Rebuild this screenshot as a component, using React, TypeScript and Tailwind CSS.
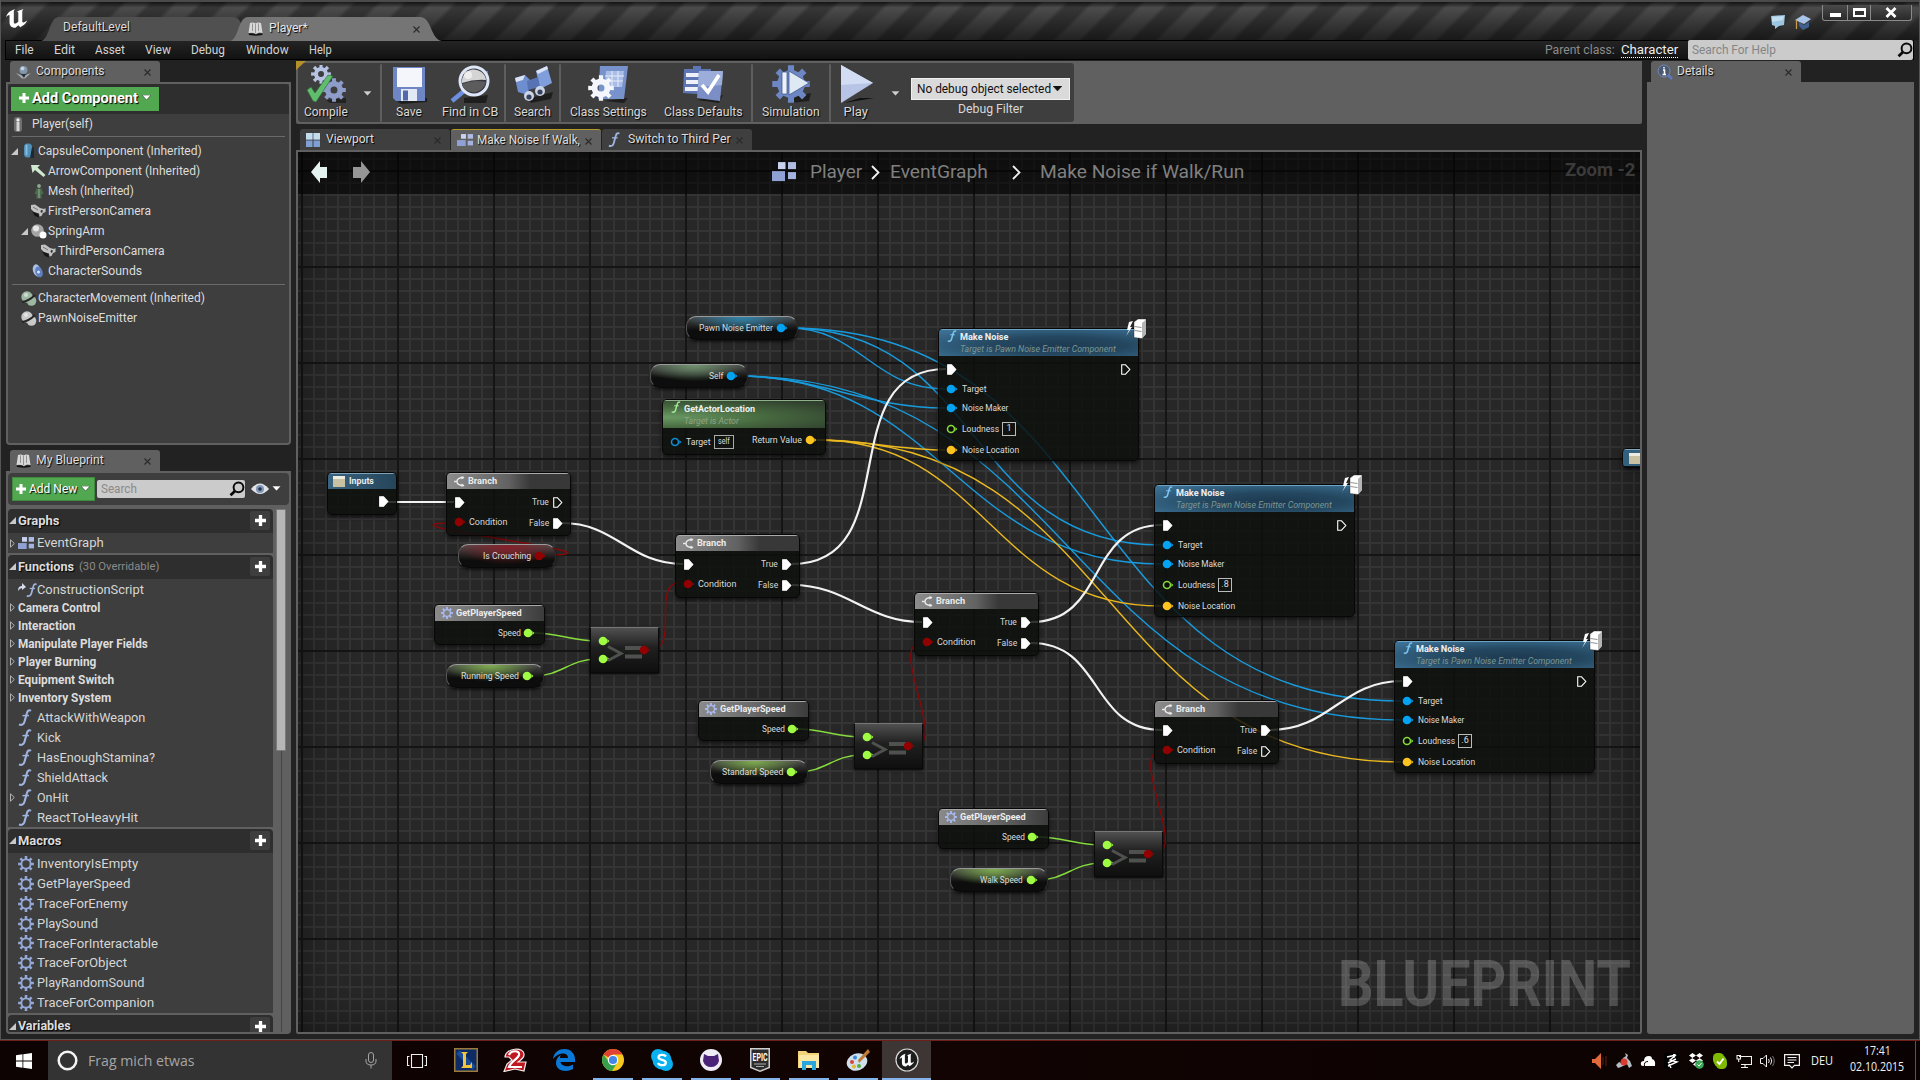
import React, { useLayoutEffect, useRef } from "react";

function Fit({ w, children, className = "" }: { w: number; children: React.ReactNode; className?: string }) {
  const ref = useRef<HTMLSpanElement>(null);
  useLayoutEffect(() => {
    const el = ref.current;
    if (el && el.offsetWidth) el.style.transform = `scaleX(${w / el.offsetWidth})`;
  }, [w]);
  return (
    <span className={"block shrink-0 whitespace-nowrap " + className} style={{ width: w }}>
      <span ref={ref} className="inline-block origin-left whitespace-nowrap">
        {children}
      </span>
    </span>
  );
}

const shadow = "[text-shadow:1px_1px_1px_#000]";

/* ---------- small icons ---------- */
const gearTeeth = (n: number, ri: number, ro: number) => {
  let d = "";
  for (let i = 0; i < n; i++) {
    const a = (i / n) * Math.PI * 2 - Math.PI / 2;
    const s = Math.PI / n;
    const p = (r: number, t: number) => `${(r * Math.cos(t)).toFixed(2)} ${(r * Math.sin(t)).toFixed(2)}`;
    d += `${i ? "L" : "M"}${p(ri, a - s * 0.55)}L${p(ro, a - s * 0.42)}L${p(ro, a + s * 0.42)}L${p(ri, a + s * 0.55)}`;
  }
  return d + "Z";
};

function Gear({ s = 16, c = "#94a8d6" }: { s?: number; c?: string }) {
  return (
    <svg width={s} height={s} viewBox="-10 -10 20 20" className="shrink-0">
      <path d={gearTeeth(8, 7, 10) + "M0 -4.6A4.6 4.6 0 1 0 0 4.6A4.6 4.6 0 1 0 0 -4.6Z"} fill={c} fillRule="evenodd" />
    </svg>
  );
}

function FuncIcon({ h = 17, c = "#9fb4e0" }: { h?: number; c?: string }) {
  return (
    <svg width={h * 0.82} height={h} viewBox="0 0 14 17" className="shrink-0">
      <path d="M13 1.8C11.4.6 9.6 1.4 8.9 4.2L6.5 12.8C5.8 15.6 3.5 16.6 1 15.4" fill="none" stroke={c} strokeWidth="2.1" />
      <path d="M4.5 6.6H11" stroke={c} strokeWidth="1.5" />
    </svg>
  );
}

function GraphIcon({ w = 17 }: { w?: number }) {
  return (
    <svg width={w} height={w * 0.8} viewBox="0 0 24 19" className="shrink-0">
      <rect x="6" y="0" width="7.5" height="7" fill="#c8d2ee" />
      <rect x="16" y="0" width="8" height="7" fill="#aebbe2" />
      <rect x="0" y="9" width="13" height="10" fill="#8fa0d4" />
      <rect x="16" y="10" width="8" height="7" fill="#a3b2de" />
    </svg>
  );
}

function Book() {
  return (
    <svg width="15" height="14" viewBox="0 0 15 14" className="shrink-0">
      <path d="M2 1Q5 0 7.5 1.5Q10 0 13 1L14.5 11Q10.500 9.500 8 12Q4.500 10 .5 11Z" fill="#d8d8d8" />
      <path d="M4.500 1.500V9M7.500 2V11M10.500 1.500V9" stroke="#777" strokeWidth=".7" />
      <path d="M.5 11.500Q5 10.500 8 12.500Q11 10.500 14.500 11.500V13L8 13.800L1 13Z" fill="#111" />
    </svg>
  );
}

function Plus({ s = 11 }: { s?: number }) {
  return (
    <svg width={s} height={s} viewBox="0 0 10 10" className="shrink-0">
      <path d="M3.500 0H6.500V3.500H10V6.500H6.500V10H3.500V6.500H0V3.500H3.500Z" fill="#fff" />
    </svg>
  );
}

function Down({ c = "#fff", w = 9 }: { c?: string; w?: number }) {
  return (
    <svg width={w} height={w / 2 + 1} viewBox="0 0 10 6" className="shrink-0">
      <path d="M0 0H10L5 5.500Z" fill={c} stroke="#111" strokeWidth=".5" />
    </svg>
  );
}

const TriOpen = () => (
  <svg width="7" height="7" viewBox="0 0 7 7" className="shrink-0">
    <path d="M7 0V7H0Z" fill="#c8c8c8" />
  </svg>
);
const TriClosed = () => (
  <svg width="5" height="9" viewBox="0 0 5 9" className="shrink-0">
    <path d="M.5 .8L4.300 4.500L.5 8.200Z" fill="none" stroke="#c0c0c0" strokeWidth=".9" />
  </svg>
);
const Close = () => (
  <svg width="7" height="7" viewBox="0 0 7 7" className="shrink-0">
    <path d="M.5 .5L6.500 6.500M6.500 .5L.5 6.500" stroke="#2a2a2a" strokeWidth="1.100" />
  </svg>
);
const Magnifier = () => (
  <svg width="16" height="16" viewBox="0 0 16 16" className="shrink-0">
    <circle cx="9.500" cy="6.300" r="4.900" fill="none" stroke="#0a0a0a" strokeWidth="2" />
    <path d="M6 10L1.500 14.300" stroke="#0a0a0a" strokeWidth="2.800" />
  </svg>
);

const ULogo = ({ s, c = "#fff" }: { s: number; c?: string }) => (
  <svg width={s} height={s * 0.86} viewBox="0 0 22 19" className="shrink-0">
    <path
      d="M0 8.500C1 4 4 1.500 9 .3C8 1.300 7.800 2 7.800 3V13.200C7.800 14.600 9 15 10.300 14.300L12.300 12.800V4C12.300 3 11.800 2.600 10.700 2.700C13 1.800 14.800 .9 17.500 0C16.600 1.100 16.300 1.700 16.300 2.800V12.300C16.300 13.500 17.200 13.700 18.300 13.300L21.300 11.500C19.500 15.300 17 16.800 14.200 18.300L12.400 16.300L9.400 18.800C5.500 19 3.500 16.800 3.500 13.300V6.500C3.500 5.500 1.800 6 0 8.500Z"
      fill={c}
    />
  </svg>
);

/* ---------- panels ---------- */
function Tab({ label, w, icon, active = true, gold = false }: { label: string; w: number; icon: React.ReactNode; active?: boolean; gold?: boolean }) {
  return (
    <div
      className={
        "flex h-[21px] w-[150px] shrink-0 items-center rounded-t-[3px] pr-[9px] pl-[6px] " +
        (active ? "bg-[#606060] " : "bg-[#3f3f3f] ") +
        (gold ? "border-t border-[#b49a28]" : "")
      }
    >
      <span className="flex w-5 shrink-0 items-center">{icon}</span>
      <Fit w={w} className={"text-[12px] leading-[19px] text-[#dedede] " + shadow}>
        {label}
      </Fit>
      <span className="mt-[2px] ml-auto">
        <Close />
      </span>
    </div>
  );
}

const CameraIcon = () => (
  <svg width="16" height="14" viewBox="0 0 16 14">
    <path d="M0 1L4 0.500L7 2.500L9 4L13 5L14.500 4V8L12 9L10.500 12L8.500 12.500L8 9.500L3 8L0 5Z" fill="#c2c2c2" />
    <path d="M1 7.500L7.500 10L8 13.500L4 12Z" fill="#161616" />
    <path d="M10 6L12 6.500L11 9L9.500 8Z" fill="#333" />
    <path d="M2 3L7 6" stroke="#777" strokeWidth="1" />
  </svg>
);
const BallsIcon = ({ c }: { c: string }) => (
  <svg width="16" height="15" viewBox="0 0 16 15">
    <circle cx="6" cy="6" r="5.700" fill={c} />
    <circle cx="10.500" cy="10" r="4.800" fill={c} />
    <path d="M1 11Q8 10 14 4" stroke="#262626" strokeWidth="1.800" fill="none" />
    <circle cx="5" cy="4" r="2" fill="#fff" opacity=".5" />
  </svg>
);

const compRows: { pad: string; w: number; label: string; open?: boolean; icon: React.ReactNode }[] = [
  { pad: "pl-[3px]", w: 164, label: "CapsuleComponent (Inherited)", open: true, icon: <svg width="11" height="16" viewBox="0 0 11 16"><rect x="1" y="0.500" width="8" height="14" rx="3.500" fill="#4f8fb8" /><rect x="2.500" y="1.500" width="2" height="11" rx="1" fill="#86bcd9" /><path d="M9 4L11 5V15L7 15Z" fill="#1b2a33" /></svg> },
  { pad: "pl-[13px]", w: 152, label: "ArrowComponent (Inherited)", icon: <svg width="15" height="13" viewBox="0 0 15 13"><path d="M0 0H9L6.500 2.500L14.500 10L12.500 12L4 5L1.500 8Z" fill="#cfe8cf" /></svg> },
  { pad: "pl-[13px]", w: 86, label: "Mesh (Inherited)", icon: <svg width="10" height="15" viewBox="0 0 10 15"><circle cx="5" cy="2" r="1.900" fill="#8fa890" /><path d="M2.500 4.500H7.500L9.500 10H7.500V14.500H2.500V10H.5Z" fill="#4d6b4f" /><path d="M5 5V14" stroke="#8fb091" /></svg> },
  { pad: "pl-[13px]", w: 103, label: "FirstPersonCamera", icon: <CameraIcon /> },
  { pad: "pl-[13px]", w: 57, label: "SpringArm", open: true, icon: <svg width="16" height="15" viewBox="0 0 16 15"><circle cx="6.500" cy="6.500" r="6.300" fill="#a5a5a5" /><circle cx="5" cy="4.500" r="3" fill="#e6e6e6" /><circle cx="12" cy="11" r="3.500" fill="#fff" /></svg> },
  { pad: "pl-[23px]", w: 107, label: "ThirdPersonCamera", icon: <CameraIcon /> },
  { pad: "pl-[13px]", w: 94, label: "CharacterSounds", icon: <svg width="13" height="15" viewBox="0 0 13 15"><ellipse cx="5" cy="6.500" rx="4" ry="6.300" transform="rotate(-18 5 6.500)" fill="#a8bfe8" /><ellipse cx="7" cy="8" rx="3.600" ry="5.500" transform="rotate(-18 7 8)" fill="#5f7fc0" /><circle cx="6.500" cy="8" r="1.500" fill="#d8e4ff" /></svg> },
];

function CompRow({ pad, w, label, open, icon }: { pad: string; w: number; label: string; open?: boolean; icon: React.ReactNode }) {
  return (
    <div className={"flex h-5 items-center " + pad}>
      <span className="w-[9px] shrink-0">{open && <TriOpen />}</span>
      <span className="mr-px flex w-[17px] shrink-0 justify-center">{icon}</span>
      <Fit w={w} className="text-[12px] text-[#dcdcdc]">{label}</Fit>
    </div>
  );
}

function SectionHead({ label, w, extra, last }: { label: string; w: number; extra?: React.ReactNode; last?: boolean }) {
  return (
    <div className={"flex shrink-0 items-center rounded-t-[4px] bg-[#2e2e2e] pr-[3px] pl-[1px] " + (last ? "h-[21px] pt-px" : "h-6 pb-px")}>
      <TriOpen />
      <Fit w={w} className={"ml-[2px] font-bold text-[#dcdcdc] " + shadow + (last ? " text-[12px] leading-[11px]" : " text-[12px] leading-[14px]")}>{label}</Fit>
      {extra}
      <span className="ml-auto flex h-[19px] w-5 items-center justify-center rounded-[2px] bg-[#3e3e3e]">
        <Plus s={11} />
      </span>
    </div>
  );
}

function Item({ label, w, icon, tri }: { label: string; w: number; icon: React.ReactNode; tri?: boolean }) {
  return (
    <div className="flex h-5 items-center pl-[2px]">
      <span className="w-[8px] shrink-0">{tri && <TriClosed />}</span>
      <span className="flex w-[19px] shrink-0 items-center">{icon}</span>
      <Fit w={w} className="mt-px text-[12.500px] text-[#d6d6d6]">{label}</Fit>
    </div>
  );
}

const categories: [string, number][] = [
  ["Camera Control", 82], ["Interaction", 57], ["Manipulate Player Fields", 130], ["Player Burning", 78], ["Equipment Switch", 96], ["Inventory System", 93],
];
const functions: [string, number, boolean][] = [
  ["AttackWithWeapon", 108, false], ["Kick", 24, false], ["HasEnoughStamina?", 118, false], ["ShieldAttack", 71, false], ["OnHit", 32, true], ["ReactToHeavyHit", 101, false],
];
const macros: [string, number][] = [
  ["InventoryIsEmpty", 101], ["GetPlayerSpeed", 93], ["TraceForEnemy", 91], ["PlaySound", 61], ["TraceForInteractable", 121], ["TraceForObject", 90], ["PlayRandomSound", 108], ["TraceForCompanion", 117],
];

function LeftColumn() {
  return (
    <div className="flex w-[285px] shrink-0 flex-col">
      <div className="pl-[4px]">
        <Tab label="Components" w={69} icon={<svg width="15" height="14" viewBox="0 0 15 14"><circle cx="7.500" cy="5" r="4" fill="#8296ad" /><circle cx="6.500" cy="3.500" r="2" fill="#c4d0dc" /><path d="M0 8L7 11L15 8L9 13.500H6Z" fill="#aaa" /><path d="M5 9L10 9L8 13Z" fill="#20304a" /></svg>} />
      </div>
      <div className="flex h-[363px] flex-col rounded-b-[4px] border-2 border-[#606060] bg-[#3e3e3e]">
        <div className="flex h-[30px] shrink-0 items-start rounded-t-[4px] bg-[#2e2e2e] pt-[3px] pl-[3px]">
          <div className="flex h-6 w-[148px] items-center bg-[#51a851] pb-[2px] pl-[8px]">
            <Plus s={10} />
            <Fit w={106} className={"ml-[3px] text-[15px] leading-5 font-bold text-white " + shadow}>Add Component</Fit>
            <span className="ml-[4px]"><Down /></span>
          </div>
        </div>
        <div className="flex h-[22px] shrink-0 items-center pb-[2px] pl-[6px]">
          <svg width="8" height="15" viewBox="0 0 8 15"><rect width="8" height="15" rx="3" fill="#6f6f6f" /><circle cx="4" cy="3" r="1.700" fill="#eee" /><path d="M2.500 5H5.500V14H2.500Z" fill="#d5d5d5" /></svg>
          <Fit w={61} className="ml-[10px] text-[12px] text-[#dcdcdc]">Player(self)</Fit>
        </div>
        <div className="mx-[4px] mb-[4px] h-px shrink-0 bg-[#6a6a6a]" />
        {compRows.map((r) => <CompRow key={r.label} {...r} />)}
        <div className="mx-[4px] mt-[3px] mb-[3px] h-px shrink-0 bg-[#6a6a6a]" />
        <CompRow pad="pl-[3px]" w={167} label="CharacterMovement (Inherited)" icon={<BallsIcon c="#9db8a2" />} />
        <CompRow pad="pl-[3px]" w={99} label="PawnNoiseEmitter" icon={<BallsIcon c="#c9c9c9" />} />
      </div>
      <div className="mt-[5px] pl-[4px]">
        <Tab label="My Blueprint" w={68} icon={<Book />} />
      </div>
      <div className="flex h-[563px] flex-col overflow-hidden rounded-b-[4px] border-2 border-[#606060] bg-[#606060]">
        <div className="flex h-[32px] shrink-0 items-center rounded-[4px] bg-[#3e3e3e] pl-[4px]">
          <div className="flex h-6 w-[83px] items-center border border-[#3f8a3f] bg-[#51a851] pl-[3px]">
            <Plus s={10} />
            <Fit w={48} className={"ml-[3px] text-[12.500px] text-white " + shadow}>Add New</Fit>
            <span className="ml-[4px]"><Down /></span>
          </div>
          <div className="ml-[2px] flex h-[18px] w-[148px] items-center justify-between rounded-[2px] bg-[#cbcbcb] pl-[4px]">
            <Fit w={36} className="text-[12px] text-[#8a8a8a]">Search</Fit>
            <Magnifier />
          </div>
          <svg width="18" height="12" viewBox="0 0 18 12" className="ml-[6px]"><path d="M0 6Q9 -5 18 6Q9 16 0 6Z" fill="#dfe2e8" /><circle cx="9" cy="6" r="4" fill="#8195b5" /><circle cx="9" cy="6" r="1.800" fill="#26324a" /></svg>
          <span className="ml-[3px]"><Down /></span>
        </div>
        <div className="mt-1 flex min-h-0 flex-1">
          <div className="flex w-[265px] shrink-0 flex-col overflow-hidden">
            <SectionHead label="Graphs" w={41} />
            <div className="mb-[2px] h-5 shrink-0 bg-[#3e3e3e]">
              <Item label="EventGraph" w={67} tri icon={<GraphIcon w={16} />} />
            </div>
            <SectionHead label="Functions" w={56} extra={<Fit w={80} className="mt-[2px] ml-[5px] text-[11px] text-[#8b8b8b]">(30 Overridable)</Fit>} />
            <div className="mb-[2px] flex h-[248px] shrink-0 flex-col bg-[#3e3e3e] pt-px">
              <Item label="ConstructionScript" w={107} icon={<span className="flex"><svg width="8" height="10" viewBox="0 0 8 10"><path d="M0 8Q0 3 4 3V0L8 4L4 7V5Q2 5 0 8Z" fill="#d7dcf0" /></svg><FuncIcon h={14} /></span>} />
              <div className="-mt-px">
                {categories.map(([c, w]) => (
                  <div key={c} className="flex h-[18px] shrink-0 items-center pl-[2px]">
                    <span className="w-[8px]"><TriClosed /></span>
                    <Fit w={w} className="text-[12px] font-bold text-[#dcdcdc]">{c}</Fit>
                  </div>
                ))}
              </div>
              <div className="pt-px">
                {functions.map(([f, w, t]) => <Item key={f} label={f} w={w} tri={t} icon={<FuncIcon />} />)}
              </div>
            </div>
            <SectionHead label="Macros" w={43} />
            <div className="mb-[2px] flex h-[160px] shrink-0 flex-col bg-[#3e3e3e] pt-px">
              {macros.map(([m, w]) => <Item key={m} label={m} w={w} icon={<Gear s={16} />} />)}
            </div>
            <SectionHead label="Variables" w={53} last />
          </div>
          <div className="ml-[3px] flex w-[10px] flex-col items-center">
            <div className="h-[242px] w-full rounded-[1px] border border-[#7a7a7a] bg-[#b6b6b6]" />
            <div className="w-px flex-1 bg-[#444]" />
          </div>
        </div>
      </div>
    </div>
  );
}

/* ---------- toolbar ---------- */
const toolIcons: Record<string, React.ReactNode> = {
  compile: (
    <>
      <g transform="translate(15 9)"><path d={gearTeeth(8, 7, 10) + "M0 -3A3 3 0 1 0 0 3A3 3 0 1 0 0 -3Z"} fill="#b8c3e4" fillRule="evenodd" /></g>
      <path d="M20 35L40 33V38H24Z" fill="#111" opacity=".6" />
      <g transform="translate(28 25)"><path d={gearTeeth(8, 9, 12) + "M0 -3.500A3.500 3.500 0 1 0 0 3.500A3.500 3.500 0 1 0 0 -3.500Z"} fill="#8d9cc9" fillRule="evenodd" /></g>
      <path d="M1 25L5 22L9 28L22 10L27 11L10 37L7 36Z" fill="#5fbd6c" stroke="#2e6b38" strokeWidth=".6" />
    </>
  ),
  save: (
    <>
      <path d="M8 36L38 33V37L12 39Z" fill="#111" opacity=".7" />
      <path d="M4 2H36V36H7L4 33Z" fill="#6f86c6" />
      <rect x="8" y="3" width="25" height="19" fill="#f4f6fc" />
      <rect x="12" y="24" width="16" height="12" fill="#e4e9f6" /><rect x="14" y="25.500" width="5" height="10" fill="#5168ab" />
    </>
  ),
  find: (
    <>
      <path d="M14 33L38 30L36 38H14Z" fill="#111" opacity=".7" />
      <path d="M34 6H38V22H34Z" fill="#5a7cc8" />
      <path d="M14 26L2 36" stroke="#6d8fe0" strokeWidth="4.500" />
      <circle cx="24" cy="16" r="14" fill="#34373d" stroke="#dfe6f7" strokeWidth="3" />
      <path d="M12 18A12 12 0 0 1 36 15Q24 14 12 18Z" fill="#d4d4d4" />
      <path d="M12 19Q24 14 36 17Q34 25 25 27.500Q14 27 12 19Z" fill="#5c5c5c" />
      <circle cx="18" cy="10" r="4" fill="#fff" opacity=".6" />
    </>
  ),
  search: (
    <>
      <path d="M14 34L40 27L38 34L18 38Z" fill="#111" opacity=".7" />
      <path d="M2 13L12 10L17 15L15 30L5 27Z" fill="#6f8ed0" /><path d="M23 6L34 1L39 18L27 24Z" fill="#7f9edb" />
      <path d="M2 13L12 10L10 15L3 17Z" fill="#dbe4f6" /><path d="M23 6L34 1L35 4L25 9Z" fill="#dbe4f6" />
      <path d="M14 16L25 12L27 22L15 25Z" fill="#5873b4" />
      <circle cx="16" cy="31" r="5" fill="#ccd5e8" /><circle cx="16" cy="32" r="2.600" fill="#39425c" />
      <circle cx="27" cy="26" r="5" fill="#ccd5e8" /><circle cx="27" cy="27" r="2.600" fill="#39425c" />
    </>
  ),
  settings: (
    <>
      <path d="M16 36L40 33L36 38Z" fill="#111" opacity=".7" />
      <path d="M12 1H40L36 34H10Z" fill="#7892cc" /><path d="M18 6H36L34 22H17Z" fill="#a9bde6" />
      <path d="M24 6V22M30 6V22M17 11H36M17 16H35" stroke="#e6edfb" strokeWidth="1" />
      <g transform="translate(13 23)"><path d={gearTeeth(8, 9.5, 13) + "M0 -3.500A3.500 3.500 0 1 0 0 3.500A3.500 3.500 0 1 0 0 -3.500Z"} fill="#f4f6fb" fillRule="evenodd" /></g>
    </>
  ),
  defaults: (
    <>
      <path d="M14 35L40 30L36 38Z" fill="#111" opacity=".7" />
      <path d="M1 4H10V1H18V4H28L26 30L0 28Z" fill="#5e76b4" />
      <path d="M3 8H17V12H3ZM3 15H16V19H3ZM2 22H15V26H2Z" fill="#eef1fa" />
      <path d="M16 6H40L37 36L14 33Z" fill="#7b8fc6" /><path d="M16 6H40L39 20L15 22Z" fill="#9badd8" />
      <path d="M19 20L25 27L36 10" stroke="#fff" strokeWidth="3.600" fill="none" />
    </>
  ),
  simulation: (
    <>
      <path d="M16 33L40 28L38 36L20 38Z" fill="#111" opacity=".7" />
      <g transform="translate(20 19)"><path d={gearTeeth(8, 14, 19)} fill="#6d87c4" /></g>
      <path d="M11 7H16V29H11Z" fill="#eef2fb" stroke="#445a90" strokeWidth=".8" /><path d="M18 6L38 18L18 30Z" fill="#dfe9f4" stroke="#445a90" strokeWidth=".8" />
    </>
  ),
  play: (
    <>
      <path d="M8 38L38 33H24Z" fill="#111" />
      <path d="M5 0L37 18L5 38Z" fill="#b7c4e6" /><path d="M5 0L37 18L5 20Z" fill="#d2dcf2" />
    </>
  ),
};

function Tool({ icon, label, w, box, drop }: { icon: string; label: string; w: number; box: string; drop?: boolean }) {
  return (
    <div className={"flex h-full shrink-0 items-center " + (drop ? "" : "justify-center ") + box}>
      <div className="flex flex-col items-center">
        <svg width="40" height="39" viewBox="0 0 40 39" className="-mb-[2px]">{toolIcons[icon]}</svg>
        <Fit w={w} className={"text-[13px] leading-[19px] text-[#d8d8d8] " + shadow}>{label}</Fit>
      </div>
      {drop && <span className="mt-[3px] ml-[15px]"><Down c="#cfcfcf" w={9} /></span>}
    </div>
  );
}

const Sep = () => <div className="h-[58px] w-[2px] shrink-0 rounded bg-[#5e5e5e]" />;

function Toolbar() {
  return (
    <div className="flex h-[63px] shrink-0 rounded-b-[2px] bg-[#606060] p-[2px]">
      <div className="relative flex h-full w-[776px] items-center rounded-[3px] bg-[#3e3e3e]">
        <svg width="10" height="9" viewBox="0 0 10 9" className="absolute -top-[2px] -left-[2px]"><path d="M0 0H10L0 9Z" fill="#b4902c" /></svg>
        <Tool icon="compile" label="Compile" w={44} box="w-[82px] pl-[6px]" drop />
        <Sep />
        <Tool icon="save" label="Save" w={26} box="w-[53px]" />
        <Tool icon="find" label="Find in CB" w={56} box="w-[69px]" />
        <Sep />
        <Tool icon="search" label="Search" w={37} box="w-[53px]" />
        <Sep />
        <Tool icon="settings" label="Class Settings" w={77} box="w-[94px]" />
        <Tool icon="defaults" label="Class Defaults" w={79} box="w-[96px]" />
        <Sep />
        <Tool icon="simulation" label="Simulation" w={58} box="w-[76px]" />
        <Sep />
        <Tool icon="play" label="Play" w={25} box="w-[71px] pl-[5px]" drop />
        <div className="mt-[10px] ml-[9px] flex w-[159px] flex-col items-center">
          <div className="flex h-[22px] w-full items-center justify-between border border-[#f0f0f0] bg-[#dadada] pr-[7px] pl-[5px]">
            <Fit w={134} className="text-[13px] text-[#111]">No debug object selected</Fit>
            <Down c="#111" w={9} />
          </div>
          <Fit w={65} className="text-[13px] leading-[18px] text-[#d8d8d8]">Debug Filter</Fit>
        </div>
      </div>
    </div>
  );
}

/* ---------- graph ---------- */
const GX = 298, GY = 152;
type P = [number, number];
function wire([x1, y1]: P, [x2, y2]: P) {
  const dx = x2 - x1;
  const o = ((dx < 0 ? -3 * dx : dx) + Math.abs(y2 - y1)) / 3;
  return `M${x1} ${y1}C${x1 + o} ${y1} ${x2 - o} ${y2} ${x2} ${y2}`;
}
const BLUE = "#189bdd", GOLD = "#eab81f", GREEN = "#86dc3c", RED = "#85090a", WHITE = "#f2f2f2";
const wires: [P, P, string, number][] = [
  [[788, 328], [945, 389], BLUE, 1.4], [[788, 328], [1161, 545], BLUE, 1.4], [[788, 328], [1401, 701], BLUE, 1.4],
  [[738, 376], [945, 408], BLUE, 1.4], [[738, 376], [1161, 564], BLUE, 1.4], [[738, 376], [1401, 720], BLUE, 1.4],
  [[817, 440], [945, 450], GOLD, 1.4], [[817, 440], [1161, 606], GOLD, 1.4], [[817, 440], [1401, 762], GOLD, 1.4],
  [[534, 633], [597, 641], GREEN, 1.4], [[534, 676], [597, 659], GREEN, 1.4],
  [[798, 729], [861, 737], GREEN, 1.4], [[798, 772], [861, 755], GREEN, 1.4],
  [[1038, 837], [1101, 845], GREEN, 1.4], [[1038, 880], [1101, 863], GREEN, 1.4],
  [[649, 650], [682, 582], RED, 1.4], [[913, 746], [923, 642], RED, 1.4], [[1153, 854], [1163, 750], RED, 1.4], [[546, 555], [455, 523], RED, 1.4],
  [[388, 502], [454, 502], WHITE, 2.2], [[562, 523], [683, 564], WHITE, 2.2], [[792, 564], [946, 369], WHITE, 2.2], [[792, 585], [922, 622], WHITE, 2.2],
  [[1031, 622], [1162, 525], WHITE, 2.2], [[1031, 643], [1162, 730], WHITE, 2.2], [[1270, 730], [1402, 681], WHITE, 2.2],
];

function Exec({ on = true }: { on?: boolean }) {
  return (
    <svg width="10" height="11" viewBox="0 0 10 11" className="shrink-0">
      <path d="M.7 .8H4.500L8.800 5.500L4.500 10.200H.7Z" fill={on ? "#fff" : "none"} stroke="#fff" strokeWidth="1.100" />
    </svg>
  );
}
function Pin({ c, on = true }: { c: string; on?: boolean }) {
  return (
    <svg width="12" height="10" viewBox="0 0 12 10" className="shrink-0">
      <circle cx="5" cy="5" r={on ? 4.3 : 3.5} fill={on ? c : "#0b0d0b"} stroke={c} strokeWidth={on ? 0 : 1.6} />
      <path d="M9.400 3L11.400 5L9.400 7Z" fill={c} />
    </svg>
  );
}

const at = (x: number, y: number) => ({ left: x - GX, top: y - GY });
const shell = "absolute rounded-[5px] border border-[#070707] bg-[#0c0f0c]/84 shadow-[0_2px_4px_rgba(0,0,0,0.6)] overflow-hidden ";
const T = ({ w, children, className = "" }: { w: number; children: React.ReactNode; className?: string }) => (
  <Fit w={w} className={"mt-px leading-[13px] " + className}>{children}</Fit>
);

function Branch({ x, y, t, f }: { x: number; y: number; t: boolean; f: boolean }) {
  return (
    <div className={shell + "h-[64px] w-[125px]"} style={at(x - 1, y)}>
      <div className="flex h-[16px] items-center border-t border-[#aaa] bg-linear-to-r from-[#8c8c8c] via-[#626262] via-50% to-[#383838] to-68% pb-px pl-[7px]">
        <svg width="11" height="11" viewBox="0 0 11 11"><path d="M0 5.500H3M10 1.500C5 1.500 3 3 3 5.500S5 9.500 10 9.500" fill="none" stroke="#e8e8e8" strokeWidth="1.400" /><path d="M7.500 0L10.500 1.500L7.500 3.500ZM7.500 7.500L10.500 9.500L7.500 11Z" fill="#e8e8e8" /></svg>
        <Fit w={29} className="ml-[3px] text-[9.500px] leading-[14px] font-bold text-[#ececec]">Branch</Fit>
      </div>
      <div className="flex justify-between pt-[3px] pr-[7px] pl-[7px] text-[9px] text-[#d8d8d8]">
        <div>
          <div className="flex h-5 items-center pl-px"><Exec /></div>
          <div className="flex h-5 items-center"><Pin c="#920101" /><T w={38} className="ml-[3px]">Condition</T></div>
        </div>
        <div className="flex flex-col items-end">
          <div className="flex h-5 items-center"><T w={17} className="mr-[4px]">True</T><Exec on={t} /></div>
          <div className="flex h-[22px] items-center"><T w={20} className="mr-[4px]">False</T><Exec on={f} /></div>
        </div>
      </div>
    </div>
  );
}

function MakeNoise({ x, y, v }: { x: number; y: number; v: string }) {
  const row = "flex items-center ";
  return (
    <>
      <div className={shell + "h-[133px] w-[201px]"} style={at(x - 1, y)}>
        <div className="flex h-[27px] border-t border-[#6fa3c4] bg-[radial-gradient(ellipse_at_60%_60%,#1d3a52_0%,#24475f_40%,#3f769c_100%)] pl-[8px]">
          <FuncIcon h={12} c="#7cc6f2" />
          <div className="ml-[3px] flex flex-col">
            <Fit w={48} className="text-[9.500px] leading-[14px] font-bold text-[#f0f0f0]">Make Noise</Fit>
            <Fit w={156} className="text-[9px] leading-[11px] text-[#7d9690] italic">Target is Pawn Noise Emitter Component</Fit>
          </div>
        </div>
        <div className="flex flex-col pt-[3px] pr-[7px] pl-[7px] text-[9px] text-[#dcdcdc]">
          <div className={row + "h-5 justify-between pl-px"}><Exec /><Exec on={false} /></div>
          <div className={row + "h-5"}><Pin c="#02a3f2" /><T w={25} className="ml-[4px]">Target</T></div>
          <div className={row + "h-[18px]"}><Pin c="#02a3f2" /><T w={46} className="ml-[4px]">Noise Maker</T></div>
          <div className={row + "h-6"}>
            <Pin c="#86dc3c" on={false} /><T w={37} className="ml-[4px]">Loudness</T>
            <span className="ml-[3px] flex h-[14px] w-[14px] items-center justify-center border border-[#bbb]">{v}</span>
          </div>
          <div className={row + "h-[18px]"}><Pin c="#fdc41f" /><T w={57} className="ml-[4px]">Noise Location</T></div>
        </div>
      </div>
      <svg width="22" height="22" viewBox="0 0 22 22" className="absolute" style={at(x + 186, y - 10)}>
        <path d="M8 3L4 4L2 12H4L1 18L7 9H5Z" fill="#fff" />
        <path d="M9 4L13 1H21V16L17 20.500L9 19.500Z" fill="#fff" stroke="#222" strokeWidth=".4" />
        <path d="M17 5L21 1.500V16L17 20.500Z" fill="#b5b5b5" /><path d="M9.500 8.500L16.500 9.500M9.500 12.500L16.500 13.500" stroke="#777" strokeWidth=".8" />
      </svg>
    </>
  );
}

function Macro({ x, y }: { x: number; y: number }) {
  return (
    <div className={shell + "h-[41px] w-[111px]"} style={at(x - 1, y)}>
      <div className="flex h-[16px] items-center border-t border-[#aaa] bg-linear-to-r from-[#8a8a8a] via-[#6a6a6a] to-[#3c3c3c] pb-px pl-[6px]">
        <Gear s={12} c="#a9b9f0" />
        <Fit w={66} className="ml-[3px] text-[9.500px] leading-[14px] font-bold text-[#ececec]">GetPlayerSpeed</Fit>
      </div>
      <div className="flex h-[24px] items-center justify-end pr-[9px] text-[9px] text-[#dcdcdc]">
        <T w={23} className="mr-[2px]">Speed</T><Pin c="#a0fb45" />
      </div>
    </div>
  );
}

const tints: Record<string, string> = {
  green: "bg-[radial-gradient(ellipse_50%_75%_at_45%_0%,#7fae4e_0%,transparent_100%),linear-gradient(#4a4a4a,#0c0d0c_60%)]",
  red: "bg-[radial-gradient(ellipse_50%_80%_at_50%_10%,#84202a_0%,transparent_100%),linear-gradient(#5a4a4a,#0c0d0c_70%)]",
  blue: "bg-[radial-gradient(ellipse_50%_75%_at_50%_0%,#2f84ac_0%,transparent_100%),linear-gradient(#4a4a4a,#0c0d0c_60%)]",
  pale: "bg-[radial-gradient(ellipse_55%_75%_at_45%_0%,#71936f_0%,transparent_100%),linear-gradient(#4a4a4a,#0c0d0c_60%)]",
};
function Pill({ x, y, label, w, c, tint, wide }: { x: number; y: number; label: string; w: number; c: string; tint: string; wide?: boolean }) {
  return (
    <div
      className={"absolute flex h-6 items-center justify-end rounded-[10px] border border-t-[#9a9a9a] border-r-[#2a2a2a] border-b-[#080808] border-l-[#555] pr-[9px] shadow-[0_2px_3px_rgba(0,0,0,0.6)] " + (wide ? "w-[112px] " : "w-[98px] ") + tints[tint]}
      style={at(x - 1, y)}
    >
      <T w={w} className="mr-[3px] text-[9px] text-[#dedede]">{label}</T>
      <Pin c={c} />
    </div>
  );
}

function Compare({ x, y }: { x: number; y: number }) {
  return (
    <div className="absolute flex h-[46px] w-[69px] items-center justify-between border border-[#0a0a0a] border-t-[#777] bg-linear-to-b from-[#505050] via-[#1e1f1e] via-45% to-[#0e0f0e] pr-[7px] pl-[7px] shadow-[0_1px_3px_#000]" style={at(x, y)}>
      <div className="flex flex-col gap-[8px]"><Pin c="#a0fb45" /><Pin c="#a0fb45" /></div>
      <svg width="37" height="17" viewBox="0 0 37 17" className="absolute top-[17px] left-[16px]"><path d="M1 1.500L14 8.500L1 15.500" fill="none" stroke="#4f514f" strokeWidth="3" /><path d="M18 3H35M18 11.500H35" fill="none" stroke="#4f514f" strokeWidth="4" /></svg>
      <div className="relative"><Pin c="#920101" /></div>
    </div>
  );
}

function Graph() {
  return (
    <div className="relative h-[884px] w-[1346px] overflow-hidden rounded-b-[2px] border-2 border-[#606060] bg-[#272727]">
      <div className="absolute inset-0 bg-[linear-gradient(90deg,#343434_2px,transparent_2px),linear-gradient(#343434_2px,transparent_2px)] bg-[size:12px_12px] bg-[position:3px_6px]" />
      <div className="absolute inset-0 bg-[linear-gradient(90deg,#151515_2px,transparent_2px),linear-gradient(#151515_2px,transparent_2px)] bg-[size:96px_96px] bg-[position:3px_18px]" />
      <div className="absolute inset-0 shadow-[inset_0_0_50px_rgba(0,0,0,0.45)]" />
      <svg width="1342" height="880" viewBox={`${GX} ${GY} 1342 880`} className="absolute inset-0">
        {wires.map(([a, b, c, w], i) => <path key={i} d={wire(a, b)} fill="none" stroke={c} strokeWidth={w} />)}
      </svg>

      <div className={shell + "h-[43px] w-[70px]"} style={at(327, 472)}>
        <div className="flex h-[16px] items-center border-t border-[#7fa3bb] bg-linear-to-r from-[#3a6480] to-[#25455a] pb-px pl-[5px]">
          <svg width="12" height="11" viewBox="0 0 12 11"><path d="M0 0H12V11H0Z" fill="#c9c2a2" /><path d="M0 0H12V3H0Z" fill="#ecebe0" /></svg>
          <Fit w={25} className="ml-[4px] text-[9.500px] leading-[14px] font-bold text-[#ececec]">Inputs</Fit>
        </div>
        <div className="flex h-[27px] items-center justify-end pr-[7px] pb-[2px]"><Exec /></div>
      </div>
      <div className={shell + "h-[20px] w-[40px]"} style={at(1622, 448)}>
        <div className="flex h-[17px] items-center border-t border-[#7fa3bb] bg-[#33607f] pl-[6px]">
          <svg width="12" height="11" viewBox="0 0 12 11"><path d="M0 0H12V11H0Z" fill="#c9c2a2" /><path d="M0 0H12V3H0Z" fill="#ecebe0" /></svg>
        </div>
      </div>

      <Branch x={447} y={472} t={false} f />
      <Branch x={676} y={534} t f />
      <Branch x={915} y={592} t f />
      <Branch x={1155} y={700} t f={false} />
      <Macro x={435} y={604} />
      <Macro x={699} y={700} />
      <Macro x={939} y={808} />
      <Pill x={447} y={664} label="Running Speed" w={58} c="#a0fb45" tint="green" />
      <Pill x={711} y={760} label="Standard Speed" w={61} c="#a0fb45" tint="green" />
      <Pill x={951} y={868} label="Walk Speed" w={43} c="#a0fb45" tint="green" />
      <Pill x={459} y={544} label="Is Crouching" w={48} c="#920101" tint="red" />
      <Pill x={687} y={316} label="Pawn Noise Emitter" w={74} c="#02a3f2" tint="blue" wide />
      <Pill x={651} y={364} label="Self" w={14} c="#02a3f2" tint="pale" />
      <Compare x={590} y={627} />
      <Compare x={854} y={723} />
      <Compare x={1094} y={831} />

      <div className={shell + "h-[56px] w-[164px]"} style={at(662, 399)}>
        <div className="flex h-[28px] border-t border-[#90b08c] bg-[radial-gradient(ellipse_at_0%_60%,#6a9a64_0%,#47693f_45%,#2f3f2e_90%)] pl-[8px]">
          <FuncIcon h={12} c="#a5ea9a" />
          <div className="ml-[3px] flex flex-col pt-px">
            <Fit w={71} className="text-[9.500px] leading-[14px] font-bold text-[#f0f0f0]">GetActorLocation</Fit>
            <Fit w={55} className="text-[9px] leading-[11px] text-[#8fa383] italic">Target is Actor</Fit>
          </div>
        </div>
        <div className="flex justify-between pr-[8px] pl-[7px] text-[9px] text-[#dcdcdc]">
          <div className="flex h-[28px] items-center">
            <Pin c="#0d8fd6" on={false} /><T w={25} className="ml-[4px]">Target</T>
            <span className="ml-[3px] flex h-[14px] w-5 items-center justify-center border border-[#aaa]"><Fit w={12}>self</Fit></span>
          </div>
          <div className="flex h-[24px] items-center"><T w={50} className="mr-[3px]">Return Value</T><Pin c="#fdc41f" /></div>
        </div>
      </div>
      <MakeNoise x={939} y={328} v="1" />
      <MakeNoise x={1155} y={484} v=".8" />
      <MakeNoise x={1395} y={640} v=".6" />

      <div className="absolute inset-x-0 top-0 flex h-[42px] items-center bg-black/55 pb-[2px] pl-[13px] text-[19px] text-[#808080]">
        <svg width="16" height="23" viewBox="0 0 16 23"><path d="M0 11L9 0V6H16V17H9V22Z" fill="#e4f2f0" /></svg>
        <svg width="17" height="23" viewBox="0 0 17 23" className="ml-[26px]"><path d="M17 11L8 0V6H0V17H8V22Z" fill="#969696" /></svg>
        <span className="ml-[402px]"><GraphIcon w={24} /></span>
        <Fit w={52} className="ml-[14px]">Player</Fit>
        <svg width="9" height="15" viewBox="0 0 9 15" className="ml-[9px]"><path d="M1 1L7.500 7.500L1 14" fill="none" stroke="#f2f2f2" strokeWidth="1.800" /></svg>
        <Fit w={98} className="ml-[10px]">EventGraph</Fit>
        <svg width="9" height="15" viewBox="0 0 9 15" className="ml-[24px]"><path d="M1 1L7.500 7.500L1 14" fill="none" stroke="#f2f2f2" strokeWidth="1.800" /></svg>
        <Fit w={204} className="ml-[19px]">Make Noise if Walk/Run</Fit>
        <Fit w={70} className="mr-[5px] mb-[4px] ml-auto text-[19px] font-bold text-[#3b3b3b]">Zoom -2</Fit>
      </div>
      <Fit w={293} className="absolute right-[9px] bottom-[10px] text-[65px] leading-[76px] font-bold text-white/20">BLUEPRINT</Fit>
    </div>
  );
}

/* ---------- window chrome ---------- */
const menu: [string, number, string][] = [
  ["File", 19, "ml-[9px]"], ["Edit", 21, "ml-5"], ["Asset", 30, "ml-5"], ["View", 26, "ml-5"], ["Debug", 34, "ml-5"], ["Window", 43, "ml-[21px]"], ["Help", 23, "ml-5"],
];
const stripes = "bg-[repeating-linear-gradient(135deg,rgba(0,0,0,0.28)_0px,rgba(0,0,0,0.28)_14px,transparent_18px,transparent_32px,rgba(0,0,0,0.28)_36px)]";

function TitleBar() {
  return (
    <div className="relative flex h-10 shrink-0 items-end border-t-2 border-[#4a4a4a] bg-linear-to-b from-[#1c1c1c] via-[#4c4c4c] via-15% to-[#222]">
      <div className={"absolute inset-0 " + stripes} />
      <div className="relative mb-[12px] ml-[5px]"><ULogo s={22} /></div>
      <div className="relative -mb-px ml-[13px] flex">
        <div className="relative flex h-6 w-[200px] items-center pl-[22px]">
          <svg width="202" height="24" viewBox="0 0 202 24" className="absolute inset-0"><path d="M0 24C9 22 8 0 18 0H192C198 0 200 5 202 12L196 24Z" fill="#505050" /></svg>
          <Fit w={67} className={"relative mb-[3px] text-[12.500px] text-[#dcdcdc] " + shadow}>DefaultLevel</Fit>
        </div>
        <div className="relative -ml-[11px] flex h-6 w-[212px] items-center pl-[18px]">
          <svg width="212" height="24" viewBox="0 0 212 24" className="absolute inset-0"><path d="M0 24C9 22 8 0 18 0H190C202 0 200 22 212 24Z" fill="#757575" /></svg>
          <span className="relative"><Book /></span>
          <Fit w={39} className={"relative mb-[2px] ml-[6px] text-[12.500px] text-[#e8e8e8] " + shadow}>Player*</Fit>
          <span className="relative mr-[22px] ml-auto"><Close /></span>
        </div>
      </div>
      <div className="relative ml-auto flex h-full items-start">
        <svg width="15" height="15" viewBox="0 0 15 15" className="mt-[13px]"><path d="M0 1L14 0L13 10L8 11L4 14V11L1 10Z" fill="#9cc5e2" /><path d="M1 2L13 1L12 5L1 7Z" fill="#c0def0" /></svg>
        <svg width="17" height="15" viewBox="0 0 17 15" className="mt-[13px] ml-[9px]"><path d="M4 7L9 10L14 7V12L8 15L4 11Z" fill="#3f5f8c" /><path d="M0 5L8 0L16 4L9 9Z" fill="#a8c4e8" /><path d="M1.500 5V14" stroke="#c89a50" strokeWidth="1.300" /></svg>
        <div className="mt-[3px] mr-[7px] ml-[10px] flex h-[16px] rounded-b-[3px] border border-t-0 border-[#8a8a8a] bg-linear-to-b from-[#4a4a4a] to-[#2a2a2a]">
          <div className="flex w-[25px] items-end justify-center border-r border-[#8a8a8a] pb-[3px]"><div className="h-[4px] w-[11px] bg-white" /></div>
          <div className="flex w-[23px] items-center justify-center border-r border-[#8a8a8a]"><div className="h-[9px] w-[13px] border-2 border-t-[3px] border-white bg-[#333]" /></div>
          <div className="flex w-[40px] items-center justify-center"><svg width="12" height="11" viewBox="0 0 12 11"><path d="M1.500 1L10.500 10M10.500 1L1.500 10" stroke="#fff" strokeWidth="2.800" /></svg></div>
        </div>
      </div>
    </div>
  );
}

function MenuBar() {
  return (
    <div className="mr-[5px] ml-[4px] flex h-5 shrink-0 items-center border border-black bg-linear-to-b from-[#242424] to-[#121212] text-[12.500px] text-[#d4d4d4]">
      {menu.map(([m, w, ml]) => <Fit key={m} w={w} className={ml}>{m}</Fit>)}
      <Fit w={70} className="ml-auto text-[#8c8c8c]">Parent class:</Fit>
      <span className="ml-[6px] border-b border-dotted border-white leading-[15px] text-[#efefef]"><Fit w={57}>Character</Fit></span>
      <div className="-my-px ml-[10px] flex h-5 w-[225px] items-center justify-between rounded-[2px] bg-[#cbcbcb] pl-[4px]">
        <Fit w={84} className="text-[12px] text-[#858585]">Search For Help</Fit>
        <Magnifier />
      </div>
    </div>
  );
}

/* ---------- taskbar ---------- */
const apps: { id: string; run: boolean; icon: React.ReactNode }[] = [
  { id: "lol", run: false, icon: <><rect x=".5" y=".5" width="23" height="23" fill="#0d2c66" stroke="#9a7b3c" strokeWidth="2" /><path d="M4 4L20 20" stroke="#2463b8" strokeWidth="5" opacity=".6" /><path d="M7 4H14L12 6V17H16L18 14V20H7L9 18V6Z" fill="#f2c53d" /></> },
  { id: "gw", run: false, icon: <><path d="M2 9C2 0 22 -2 21 7C21 11 17 12 15 14L23 14L21 23L12 21L1 23.500L4 16L9 12L6 9Z" fill="#c01820" stroke="#f4eaea" strokeWidth="1.200" /><path d="M6 7C8 2 17 2 16 7C15 11 8 13 6 19H19" fill="none" stroke="#fff" strokeWidth="2.200" /></> },
  { id: "edge", run: false, icon: <path d="M1 11C2 4 7 1 12.500 1C19 1 23 6 23 11V14H8.500C9 18 16 20 21 16.500V21C14 25 4 23 4 15C4 11 6 8.500 9 7C8 8 8 9.500 8 10H16C16 4 7 4 1 11Z" fill="#0a78d7" /> },
  { id: "chrome", run: true, icon: <><circle cx="12" cy="12" r="11" fill="#f6c91c" /><path d="M12 12L2.500 6.500A11 11 0 0 1 21.500 6.500H12Z" fill="#df4232" /><path d="M2.500 6.500A11 11 0 0 0 11 23L16 15L8 14Z" fill="#37a04e" /><circle cx="12" cy="12" r="5.200" fill="#fff" /><circle cx="12" cy="12" r="4.100" fill="#4286e8" /></> },
  { id: "skype", run: true, icon: <><circle cx="8" cy="8" r="7" fill="#0ab0ef" /><circle cx="16" cy="16" r="7" fill="#0ab0ef" /><circle cx="12" cy="12" r="9.500" fill="#0ab0ef" /><path d="M16 8.500C14 6 8.500 6.500 8.500 9.300C8.500 12.800 15.800 11 15.800 14.700C15.800 18 9.500 18 8 15" fill="none" stroke="#fff" strokeWidth="2.300" /></> },
  { id: "git", run: true, icon: <><circle cx="12" cy="12" r="11" fill="#f0ecf6" /><path d="M5 6L9 8H15L19 6L20 13Q18 19 12 19T4 13Z" fill="#4a2277" /></> },
  { id: "epic", run: true, icon: <><path d="M2 0H22V20L12 24L2 20Z" fill="#d0d0d0" /><path d="M3.500 1.500H20.500V19L12 22.500L3.500 19Z" fill="#2c2c2c" /><text x="12" y="12.500" textAnchor="middle" fontSize="10" fontWeight="bold" fill="#fff" fontFamily="Roboto" textLength="15" lengthAdjust="spacingAndGlyphs">EPIC</text><path d="M6 16H18M8 18.500H16" stroke="#aaa" /></> },
  { id: "files", run: true, icon: <><path d="M1 3H9L11 5H22V20H1Z" fill="#f3d27a" /><path d="M2 7H22V20H2Z" fill="#fbe7a4" /><path d="M5 22V13H19V22H15V17H9V22Z" fill="#2ba5de" /></> },
  { id: "paint", run: true, icon: <><ellipse cx="11" cy="14" rx="10.500" ry="8.500" fill="#cfe0ec" transform="rotate(-20 11 14)" /><circle cx="6" cy="14" r="2" fill="#d8433b" /><circle cx="9" cy="9.500" r="2" fill="#3b8ad8" /><circle cx="8" cy="18.500" r="2" fill="#e9b62c" /><circle cx="13" cy="18" r="2" fill="#58a846" /><path d="M22 1L24 4L13 15L12 12Z" fill="#c07a35" /></> },
  { id: "ue", run: true, icon: <><circle cx="12" cy="12" r="11" fill="#1d1d1d" stroke="#d8d8d8" strokeWidth="1.200" /><path transform="translate(4.500 5.500) scale(.69)" d="M0 8.500C1 4 4 1.500 9 .3C8 1.300 7.800 2 7.800 3V13.200C7.800 14.600 9 15 10.300 14.300L12.300 12.800V4C12.300 3 11.800 2.600 10.700 2.700C13 1.800 14.800 .9 17.500 0C16.600 1.100 16.300 1.700 16.300 2.800V12.300C16.300 13.500 17.200 13.700 18.300 13.300L21.300 11.500C19.500 15.300 17 16.800 14.200 18.300L12.400 16.300L9.400 18.800C5.500 19 3.500 16.800 3.500 13.300V6.500C3.500 5.500 1.800 6 0 8.500Z" fill="#fff" /></> },
];

const tray: [string, React.ReactNode][] = [
  ["snd", <><path d="M0 6H3L9 0V16L3 10H0Z" fill="#e06a3c" /><path d="M11 4V12M14 3V13" stroke="#5a2012" /></>],
  ["red", <><path d="M0 12L3 9L5 10L7 5L10 3L9 0L12 2L11 5L14 8L16 13L13 15L11 11L5 14L2 15Z" fill="#b4bcc0" /><circle cx="8" cy="9" r="3.500" fill="#d83c30" /></>],
  ["cloud", <><path d="M1 12Q0 8 4 8Q4 3 9 3Q12 3 12 6Q16 7 15 13H4Q1 13 1 12Z" fill="#fff" /><path d="M4.500 13.200Q3.500 8.500 8 8.500" stroke="#120504" strokeWidth="1" fill="none" /></>],
  ["s", <><rect width="16" height="16" fill="#000" /><path d="M3 4L12 2L6 7L13 9L4 13M10 1V5M5 11L7 15M12 6L4 10" stroke="#fff" strokeWidth="1.400" fill="none" /></>],
  ["db", <><path d="M4.500 0L8 2.500L4.500 5L1 2.500ZM11.500 0L15 2.500L11.500 5L8 2.500ZM4.500 5L8 7.500L4.500 10L1 7.500ZM11.500 5L15 7.500L11.500 10L8 7.500ZM8 9L11 11.500L8 13.500L5 11.500Z" fill="#fff" /><path d="M8 3.500L11.500 5.200L8 7L4.500 5.200Z" fill="#120504" /><circle cx="11.500" cy="11.500" r="4.300" fill="#3aa857" /><path d="M9.500 11.500L11 13L13.500 10" stroke="#fff" fill="none" /></>],
  ["sk", <><rect x="1" y="0" width="11" height="11" rx="4.500" fill="#7fba00" /><rect x="4" y="5" width="11" height="11" rx="4.500" fill="#7fba00" /><circle cx="8" cy="8" r="6.500" fill="#7fba00" /><path d="M5 8.500L7.500 11L11.500 5.500" stroke="#fff" strokeWidth="1.800" fill="none" /></>],
  ["net", <path d="M3 3.500H15.500V11.500H5M9 12V14.500M5 14.500H12M1 2.500H4.500V6H1ZM2.700 6V9" fill="none" stroke="#f0f0f0" strokeWidth="1.100" />],
  ["vol", <><path d="M.5 5.500H3L6.500 2V14L3 10.500H.5Z" fill="none" stroke="#f0f0f0" /><path d="M8.500 6Q10 8 8.500 10M10.500 4.500Q13 8 10.500 11.500" stroke="#f0f0f0" fill="none" /><path d="M12.500 3Q16 8 12.500 13" stroke="#777" fill="none" /></>],
  ["note", <path d="M.6 1.600H15.400V12.400H10.500L8 15L5.500 12.400H.6ZM3.500 4.500H12.500M3.500 7H12.500M3.500 9.500H10" fill="none" stroke="#f0f0f0" strokeWidth="1.200" />],
];

function Taskbar() {
  return (
    <div className="flex h-10 shrink-0 items-center border-t border-[#6d2018] bg-linear-to-r from-[#0d0302] via-[#110403] to-[#0a0202] font-['Open_Sans',sans-serif]">
      <div className="flex w-12 justify-center">
        <svg width="16" height="16" viewBox="0 0 16 16"><path d="M0 2.300L6.500 1.300V7.600H0ZM7.300 1.200L16 0V7.600H7.300ZM0 8.400H6.500V14.700L0 13.700ZM7.300 8.400H16V16L7.300 14.800Z" fill="#fff" /></svg>
      </div>
      <div className="flex h-full w-[344px] items-center bg-[#343333] pr-[15px] pl-[9px]">
        <svg width="21" height="21" viewBox="0 0 21 21"><circle cx="10.500" cy="10.500" r="8.800" fill="none" stroke="#f4f4f4" strokeWidth="2.500" /></svg>
        <Fit w={107} className="ml-[10px] text-[14px] text-[#a5a5a5]">Frag mich etwas</Fit>
        <svg width="12" height="17" viewBox="0 0 12 17" className="ml-auto"><rect x="3.500" y=".5" width="5" height="10" rx="2.500" fill="none" stroke="#a5a5a5" /><path d="M1 7V9Q1 13 6 13T11 9V7M6 13V16.500" fill="none" stroke="#a5a5a5" /></svg>
      </div>
      <div className="flex w-[49px] justify-center">
        <svg width="20" height="14" viewBox="0 0 20 14"><path d="M4.500 .5H15.500V13.500H4.500ZM2.500 2.500H.5V11.500H2.500M17.500 2.500H19.500V11.500H17.500" fill="none" stroke="#f0f0f0" strokeWidth="1.100" /></svg>
      </div>
      {apps.map((a) => (
        <div key={a.id} className={"flex h-full w-[49px] flex-col items-center pt-[7px] " + (a.id === "ue" ? "bg-[#3d3635]" : "")}>
          <svg width="24" height="24" viewBox="0 0 24 24">{a.icon}</svg>
          {a.run && <div className={"mt-auto h-[2px] bg-[#84b4ea] " + (a.id === "ue" ? "w-full" : "w-10")} />}
        </div>
      ))}
      <div className="ml-auto flex h-full items-center">
        <div className="flex gap-[8px]">
          {tray.map(([id, icon]) => <svg key={id} width="16" height="16" viewBox="0 0 16 16">{icon}</svg>)}
        </div>
        <Fit w={22} className="ml-[11px] text-[12px] text-[#f0f0f0]">DEU</Fit>
        <div className="ml-[17px] flex w-[54px] flex-col items-center pb-[3px] text-[12px] leading-[16px] text-[#f0f0f0]">
          <Fit w={27}>17:41</Fit>
          <Fit w={54}>02.10.2015</Fit>
        </div>
        <div className="ml-[11px] h-full w-[5px] border-l border-[#5c5252]" />
      </div>
    </div>
  );
}

export default function App() {
  return (
    <div className="flex h-[1080px] w-[1920px] flex-col overflow-hidden bg-[#222] font-[Roboto,sans-serif]">
      <div className="flex h-[1040px] shrink-0 flex-col border-r border-b border-l border-[#555] bg-[#222]">
        <TitleBar />
        <MenuBar />
        <div className="flex min-h-0 flex-1 bg-[#222] pt-px pl-[5px]">
          <LeftColumn />
          <div className="ml-[5px] flex w-[1346px] shrink-0 flex-col">
            <Toolbar />
            <div className="mt-[5px] flex gap-px pl-[4px]">
              <Tab label="Viewport" w={48} active={false} icon={<svg width="14" height="15" viewBox="0 0 14 15"><path d="M0 1H6.500V7.500H0ZM7.500 1H14V7.500H7.500ZM0 8.500H6.500V15H0ZM7.500 8.500H14V15H7.500Z" fill="#7f9fd2" /><path d="M0 1H6.500V7.500H0ZM7.500 1H14V7.500H7.500Z" fill="#c4dcec" /></svg>} />
              <Tab label="Make Noise If Walk," w={103} gold icon={<GraphIcon w={16} />} />
              <Tab label="Switch to Third Per" w={103} active={false} icon={<FuncIcon h={15} />} />
            </div>
            <Graph />
          </div>
          <div className="ml-[5px] flex w-[267px] shrink-0 flex-col">
            <div className="pl-[4px]">
              <Tab label="Details" w={37} icon={<svg width="16" height="16" viewBox="0 0 16 16"><path d="M10 10L15 15" stroke="#5a7ac4" strokeWidth="2.500" /><circle cx="7" cy="7" r="6" fill="#4c5a70" stroke="#7088bb" /><path d="M7 3V4.500M6 6H7.500V10.500M5.500 10.500H9" stroke="#fff" strokeWidth="1.500" fill="none" /></svg>} />
            </div>
            <div className="h-[952px] rounded-b-[3px] bg-[#606060]" />
          </div>
        </div>
      </div>
      <Taskbar />
    </div>
  );
}
